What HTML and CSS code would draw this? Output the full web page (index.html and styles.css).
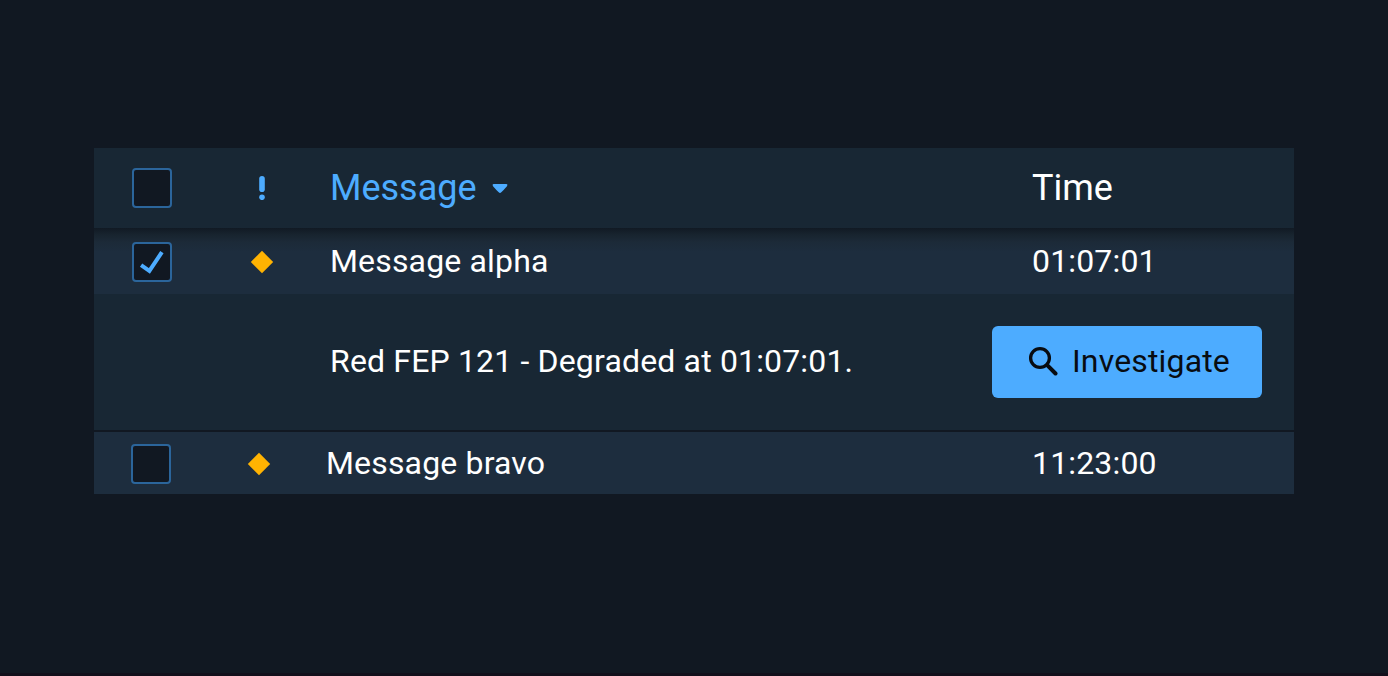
FILE: index.html
```html
<!DOCTYPE html>
<html lang="en">
<head>
<meta charset="utf-8">
<title>Event log</title>
<link rel="stylesheet" href="styles.css">
</head>
<body>
<main class="log">
  <div class="row header">
    <span class="checkbox"></span>
    <svg class="severity" viewBox="0 0 24 24"><rect x="9.2" y="0" width="5.6" height="16" rx="2.8" fill="#4dacff"/><circle cx="12" cy="21.3" r="2.8" fill="#4dacff"/></svg>
    <span class="message sorted">Message<svg class="caret" viewBox="0 0 16 10"><path d="M1.6 0H14.4Q16 .3 15.2 1.8Q14.5 3.3 9.3 8.2Q8 9.7 6.7 8.2Q1.5 3.3 .8 1.8Q0 .3 1.6 0Z" fill="#4dacff"/></svg></span>
    <span class="time">Time</span>
  </div>
  <div class="row entry alpha">
    <span class="checkbox"><svg class="check" viewBox="0 0 36 36"><path d="M7.1 21.1L15.4 26.9L27.9 8.2" fill="none" stroke="#4dacff" stroke-width="4"/></svg></span>
    <svg class="severity" viewBox="0 0 24 24"><path d="M12 .8L23.2 12L12 23.2L.8 12Z" fill="#ffb302"/></svg>
    <span class="message">Message alpha</span>
    <span class="time">01:07:01</span>
  </div>
  <div class="detail">
    <span class="description">Red FEP 121 - Degraded at 01:07:01.</span>
    <button class="investigate"><svg class="search" viewBox="0 0 30 30"><circle cx="12" cy="12" r="9.4" fill="none" stroke="#080c11" stroke-width="3.3"/><path d="M19.2 19.2L27.5 27.5" stroke="#080c11" stroke-width="4" stroke-linecap="round"/></svg>Investigate</button>
  </div>
  <div class="row entry bravo">
    <span class="checkbox"></span>
    <svg class="severity" viewBox="0 0 24 24"><path d="M12 .8L23.2 12L12 23.2L.8 12Z" fill="#ffb302"/></svg>
    <span class="message">Message bravo</span>
    <span class="time">11:23:00</span>
  </div>
</main>
</body>
</html>
```
FILE: styles.css
```css
* { box-sizing: border-box; }
body {
  margin: 0;
  height: 676px;
  padding: 148px 94px 0;
  background: #111822;
  border-bottom: 3px solid #120f1b;
  color: #fff;
  font: 32px/40px Roboto, sans-serif;
  letter-spacing: .16px;
}
.log { width: 1200px; }
.row {
  display: grid;
  grid-template-columns: 118px 80px 702px 1fr;
  align-items: center;
  padding-left: 38px;
  background: #1d2d3e;
}
.header { height: 80px; background: #182734; font-size: 36px; letter-spacing: 0; }
.alpha {
  height: 66px;
  background: linear-gradient(#111a24 0, #18242f 7px, #1c2a38 14px, #1d2d3e 24px);
}
.bravo {
  height: 62px;
  margin-top: 2px;
  padding-left: 37px;
  grid-template-columns: 116px 79px 706px 1fr;
}
.checkbox {
  width: 40px;
  height: 40px;
  border: 2px solid #2b659b;
  border-radius: 4px;
  background: #111822;
}
.check { display: block; width: 36px; height: 36px; }
.severity { width: 24px; height: 24px; }
.entry .checkbox, .entry .severity { margin-top: 2px; }
.sorted { display: flex; align-items: center; color: #4dacff; }
.caret { width: 16px; height: 10px; margin: 2px 0 0 15px; }
.detail {
  display: flex;
  align-items: center;
  justify-content: space-between;
  height: 136px;
  padding: 0 32px 0 236px;
  background: #182734;
}
.description { padding-bottom: 2px; }
.investigate {
  display: flex;
  align-items: center;
  gap: 14px;
  width: 270px;
  height: 72px;
  padding: 0 0 2px 36px;
  border: 0;
  border-radius: 6px;
  background: #4dacff;
  color: #080c11;
  font: inherit;
  letter-spacing: inherit;
}
.search { width: 30px; height: 30px; }
```
